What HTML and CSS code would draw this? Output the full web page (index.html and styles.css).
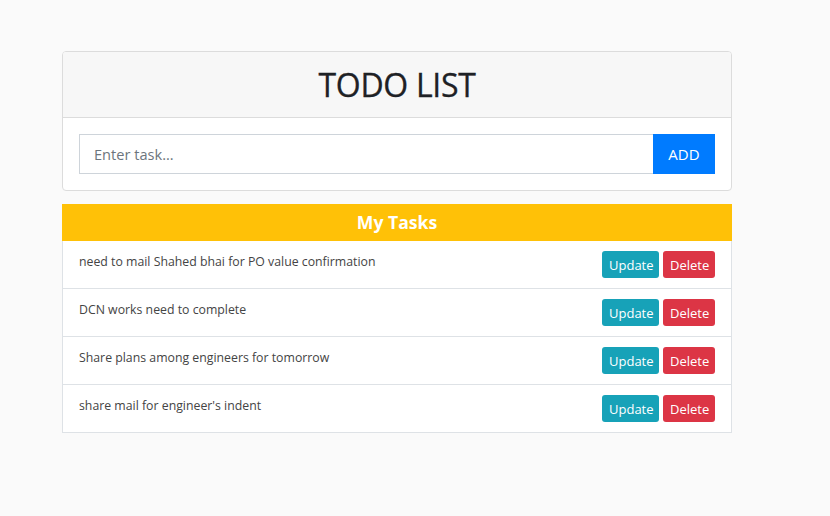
FILE: index.html
```html
<!DOCTYPE html>
<html>
<head>
<meta charset="utf-8">
<link rel="stylesheet" href="styles.css">
</head>
<body>
<div class="wrap">
  <div class="card">
    <div class="card-header"><h1 class="title">TODO LIST</h1></div>
    <div class="card-body">
      <div class="input-group">
        <input class="task-input" type="text" placeholder="Enter task...">
        <button class="btn-add">ADD</button>
      </div>
    </div>
  </div>
  <div class="tasks">
    <div class="tasks-head">My Tasks</div>
    <ul class="task-list">
      <li class="task"><span class="task-text">need to mail Shahed bhai for PO value confirmation</span><span class="actions"><button class="btn btn-update">Update</button><button class="btn btn-delete">Delete</button></span></li>
      <li class="task"><span class="task-text">DCN works need to complete</span><span class="actions"><button class="btn btn-update">Update</button><button class="btn btn-delete">Delete</button></span></li>
      <li class="task"><span class="task-text">Share plans among engineers for tomorrow</span><span class="actions"><button class="btn btn-update">Update</button><button class="btn btn-delete">Delete</button></span></li>
      <li class="task"><span class="task-text">share mail for engineer's indent</span><span class="actions"><button class="btn btn-update">Update</button><button class="btn btn-delete">Delete</button></span></li>
    </ul>
  </div>
</div>
</body>
</html>
```
FILE: styles.css
```css
* { box-sizing: border-box; }
html, body { margin: 0; padding: 0; }
body {
  background: #fafafa;
  font-family: "Open Sans", "Noto Sans", sans-serif;
  color: #212529;
}
.wrap {
  width: 670px;
  margin-left: 62px;
  padding-top: 51px;
}
.card {
  background: #fff;
  border: 1px solid #dcdcdc;
  border-radius: 4px;
  overflow: hidden;
}
.card-header {
  background: #f7f7f7;
  border-bottom: 1px solid #dcdcdc;
  height: 66px;
  display: flex;
  align-items: center;
  justify-content: center;
  padding-bottom: 1px;
}
.title {
  margin: 0;
  font-size: 32px;
  font-weight: 400;
  color: #1e2125;
  letter-spacing: -0.3px;
  -webkit-text-stroke: 0.3px #1e2125;
}
.card-body {
  padding: 16px;
}
.input-group {
  display: flex;
  height: 40px;
}
.task-input {
  flex: 1;
  height: 40px;
  border: 1px solid #ced4da;
  border-right: none;
  padding: 0 14px;
  font-family: inherit;
  font-size: 14.6px;
  color: #495057;
  outline: none;
}
.task-input::placeholder { color: #6c757d; }
.btn-add {
  width: 62px;
  height: 40px;
  border: none;
  background: #007bff;
  color: #fff;
  font-family: inherit;
  font-size: 15px;
  padding: 0;
}
.tasks {
  margin-top: 13px;
}
.tasks-head {
  background: #ffc107;
  color: #fff;
  font-weight: 700;
  font-size: 17.6px;
  height: 37px;
  display: flex;
  align-items: center;
  justify-content: center;
  padding-bottom: 1px;
}
.task-list {
  list-style: none;
  margin: 0;
  padding: 0;
  background: #fff;
  border: 1px solid #dee2e6;
  border-top: none;
}
.task {
  height: 48px;
  border-bottom: 1px solid #dee2e6;
  display: flex;
  justify-content: space-between;
  padding: 0 16px;
}
.task:last-child {
  height: 47px;
  border-bottom: none;
}
.task-text {
  font-size: 12.3px;
  color: #444;
  padding-top: 12px;
}
.actions {
  display: flex;
  gap: 4px;
  padding-top: 10px;
}
.btn {
  height: 27px;
  border: none;
  border-radius: 3px;
  color: #fff;
  font-family: inherit;
  font-size: 13px;
  padding: 0 7px;
}
.btn-update { background: #17a2b8; width: 57px; }
.btn-delete { background: #dc3545; width: 52px; }
```
